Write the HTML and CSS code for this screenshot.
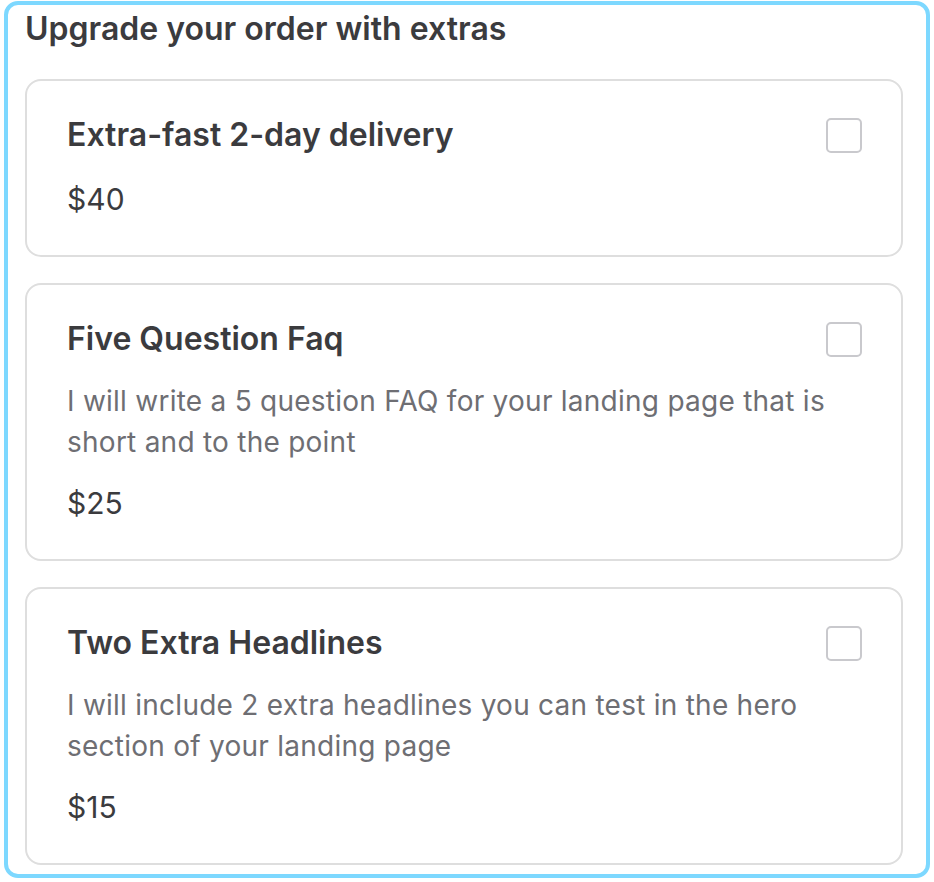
FILE: index.html
```html
<!DOCTYPE html>
<html lang="en">
<head>
<meta charset="utf-8">
<title>Upgrade your order with extras</title>
<link rel="stylesheet" href="styles.css">
</head>
<body>
<section class="extras">
  <h2 class="extras-title">Upgrade your order with extras</h2>
  <div class="extras-list">
    <label class="extra-card">
      <div class="extra-head">
        <span class="extra-name">Extra-fast 2-day delivery</span>
        <input type="checkbox" class="extra-check">
      </div>
      <div class="extra-price">$40</div>
    </label>
    <label class="extra-card">
      <div class="extra-head">
        <span class="extra-name">Five Question Faq</span>
        <input type="checkbox" class="extra-check">
      </div>
      <p class="extra-desc">I will write a 5 question FAQ for your landing page that is short and to the point</p>
      <div class="extra-price">$25</div>
    </label>
    <label class="extra-card">
      <div class="extra-head">
        <span class="extra-name">Two Extra Headlines</span>
        <input type="checkbox" class="extra-check">
      </div>
      <p class="extra-desc">I will include 2 extra headlines you can test in the hero section of your landing page</p>
      <div class="extra-price">$15</div>
    </label>
  </div>
</section>
</body>
</html>
```

FILE: styles.css
```css
* { box-sizing: border-box; }
html, body { margin: 0; padding: 0; background: #ffffff; }
body {
  font-family: Inter, "Noto Sans", "Liberation Sans", sans-serif;
  color: #3b3b3e;
}
.extras {
  margin: 1px 4px 0 4px;
  width: 926px;
  height: 877px;
  border: 4px solid #7dd8ff;
  border-radius: 14px;
  padding: 4px 23px 0 17px;
}
.extras-title {
  margin: 0 0 30px 0;
  font-size: 32px;
  line-height: 40px;
  font-weight: 600;
  color: #3b3b3e;
}
.extras-list {
  display: flex;
  flex-direction: column;
  gap: 26px;
}
.extra-card {
  display: flex;
  flex-direction: column;
  border: 2px solid #dedede;
  border-radius: 16px;
  padding: 34px 39px 36px 40px;
}
.extra-head {
  display: flex;
  align-items: center;
  justify-content: space-between;
}
.extra-name {
  font-size: 32px;
  line-height: 40px;
  font-weight: 600;
  color: #3b3b3e;
}
.extra-check {
  appearance: none;
  -webkit-appearance: none;
  margin: 0;
  width: 36px;
  height: 35px;
  border: 2px solid #c9c9cd;
  border-radius: 5px;
  background: #fff;
}
.extra-desc {
  margin: 22px 0 0 0;
  font-size: 28px;
  line-height: 41px;
  letter-spacing: 0.25px;
  color: #6e6e73;
}
.extra-price {
  margin-top: 20px;
  font-size: 30px;
  line-height: 40px;
  color: #3b3b3e;
}
.extra-card > .extra-head + .extra-price { margin-top: 24px; }
```
